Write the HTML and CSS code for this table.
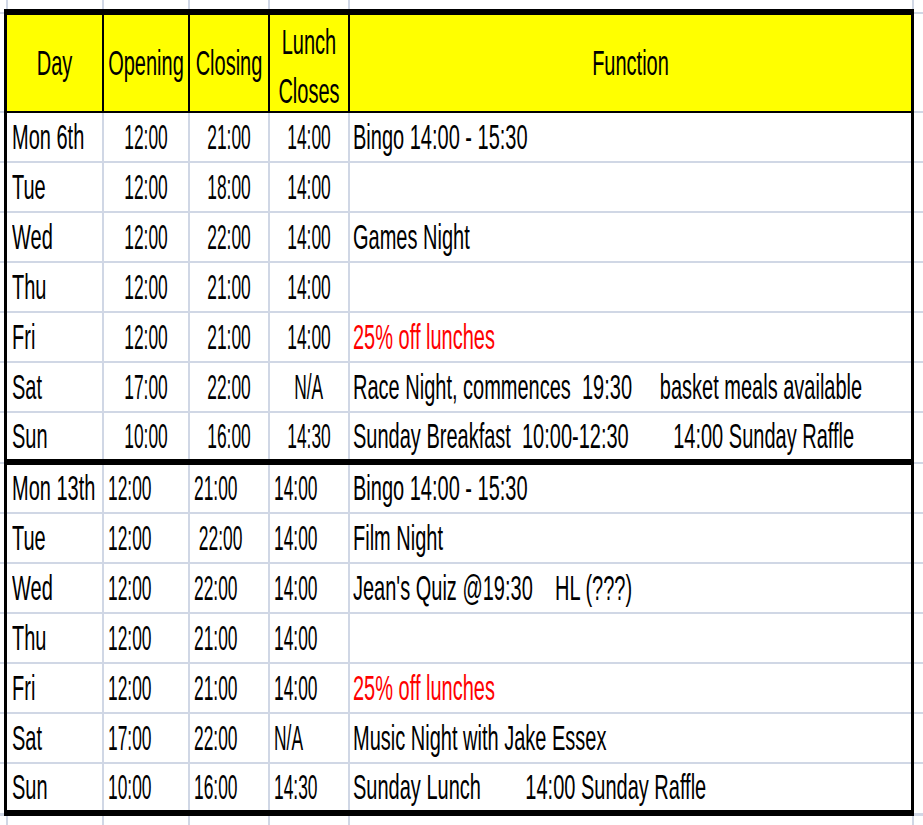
FILE: index.html
```html
<!DOCTYPE html>
<html lang="en">
<head>
<meta charset="utf-8">
<title>Club Opening Times</title>
<link rel="stylesheet" href="styles.css">
</head>
<body>
<div class="sheet">
  <div class="row head">
    <div class="c"><span class="t">Day</span></div>
    <div class="c"><span class="t">Opening</span></div>
    <div class="c"><span class="t">Closing</span></div>
    <div class="c lc"><span class="t two">Lunch
Closes</span></div>
    <div class="c"><span class="t">Function</span></div>
  </div>

  <div class="block b1">
    <div class="row"><div class="c day"><span class="t">Mon 6th</span></div><div class="c tm"><span class="n">12:00</span></div><div class="c tm"><span class="n">21:00</span></div><div class="c tm"><span class="n">14:00</span></div><div class="c fn"><span class="t">Bingo 14:00 - 15:30</span></div></div>
    <div class="row"><div class="c day"><span class="t">Tue</span></div><div class="c tm"><span class="n">12:00</span></div><div class="c tm"><span class="n">18:00</span></div><div class="c tm"><span class="n">14:00</span></div><div class="c fn"></div></div>
    <div class="row"><div class="c day"><span class="t">Wed</span></div><div class="c tm"><span class="n">12:00</span></div><div class="c tm"><span class="n">22:00</span></div><div class="c tm"><span class="n">14:00</span></div><div class="c fn"><span class="t">Games Night</span></div></div>
    <div class="row"><div class="c day"><span class="t">Thu</span></div><div class="c tm"><span class="n">12:00</span></div><div class="c tm"><span class="n">21:00</span></div><div class="c tm"><span class="n">14:00</span></div><div class="c fn"></div></div>
    <div class="row"><div class="c day"><span class="t">Fri</span></div><div class="c tm"><span class="n">12:00</span></div><div class="c tm"><span class="n">21:00</span></div><div class="c tm"><span class="n">14:00</span></div><div class="c fn"><span class="t red">25% off lunches</span></div></div>
    <div class="row"><div class="c day"><span class="t">Sat</span></div><div class="c tm"><span class="n">17:00</span></div><div class="c tm"><span class="n">22:00</span></div><div class="c tm"><span class="n">N/A</span></div><div class="c fn"><span class="t">Race Night, commences  19:30     basket meals available</span></div></div>
    <div class="row"><div class="c day"><span class="t">Sun</span></div><div class="c tm"><span class="n">10:00</span></div><div class="c tm"><span class="n">16:00</span></div><div class="c tm"><span class="n">14:30</span></div><div class="c fn"><span class="t">Sunday Breakfast  10:00-12:30        14:00 Sunday Raffle</span></div></div>
  </div>

  <div class="block b2">
    <div class="row"><div class="c day"><span class="t">Mon 13th</span></div><div class="c tl"><span class="n">12:00</span></div><div class="c tl"><span class="n">21:00</span></div><div class="c tl"><span class="n">14:00</span></div><div class="c fn"><span class="t">Bingo 14:00 - 15:30</span></div></div>
    <div class="row"><div class="c day"><span class="t">Tue</span></div><div class="c tl"><span class="n">12:00</span></div><div class="c tl"><span class="n"> 22:00</span></div><div class="c tl"><span class="n">14:00</span></div><div class="c fn"><span class="t">Film Night</span></div></div>
    <div class="row"><div class="c day"><span class="t">Wed</span></div><div class="c tl"><span class="n">12:00</span></div><div class="c tl"><span class="n">22:00</span></div><div class="c tl"><span class="n">14:00</span></div><div class="c fn"><span class="t">Jean's Quiz @19:30    HL (???)</span></div></div>
    <div class="row"><div class="c day"><span class="t">Thu</span></div><div class="c tl"><span class="n">12:00</span></div><div class="c tl"><span class="n">21:00</span></div><div class="c tl"><span class="n">14:00</span></div><div class="c fn"></div></div>
    <div class="row"><div class="c day"><span class="t">Fri</span></div><div class="c tl"><span class="n">12:00</span></div><div class="c tl"><span class="n">21:00</span></div><div class="c tl"><span class="n">14:00</span></div><div class="c fn"><span class="t red">25% off lunches</span></div></div>
    <div class="row"><div class="c day"><span class="t">Sat</span></div><div class="c tl"><span class="n">17:00</span></div><div class="c tl"><span class="n">22:00</span></div><div class="c tl"><span class="n">N/A</span></div><div class="c fn"><span class="t">Music Night with Jake Essex</span></div></div>
    <div class="row"><div class="c day"><span class="t">Sun</span></div><div class="c tl"><span class="n">10:00</span></div><div class="c tl"><span class="n">16:00</span></div><div class="c tl"><span class="n">14:30</span></div><div class="c fn"><span class="t">Sunday Lunch        14:00 Sunday Raffle</span></div></div>
  </div>
</div>
</body>
</html>
```

FILE: styles.css
```css
html, body {
  margin: 0;
  padding: 0;
}

body {
  width: 923px;
  height: 825px;
  overflow: hidden;
  font-family: "Liberation Sans", Arial, sans-serif;
  color: #000;
  background-color: #fff;
  background-image:
    linear-gradient(#d0d7e5, #d0d7e5),
    linear-gradient(#d0d7e5, #d0d7e5),
    linear-gradient(#d0d7e5, #d0d7e5),
    linear-gradient(#d0d7e5, #d0d7e5),
    linear-gradient(#d0d7e5, #d0d7e5),
    linear-gradient(#d0d7e5, #d0d7e5),
    linear-gradient(#d0d7e5, #d0d7e5),
    linear-gradient(#d0d7e5, #d0d7e5),
    linear-gradient(#d0d7e5, #d0d7e5),
    linear-gradient(#d0d7e5, #d0d7e5),
    linear-gradient(#d0d7e5, #d0d7e5),
    linear-gradient(#d0d7e5, #d0d7e5),
    linear-gradient(#d0d7e5, #d0d7e5),
    linear-gradient(#d0d7e5, #d0d7e5),
    linear-gradient(#d0d7e5, #d0d7e5),
    linear-gradient(#d0d7e5, #d0d7e5),
    linear-gradient(#d0d7e5, #d0d7e5),
    linear-gradient(#d0d7e5, #d0d7e5),
    linear-gradient(#d0d7e5, #d0d7e5),
    linear-gradient(#d0d7e5, #d0d7e5),
    linear-gradient(#d0d7e5, #d0d7e5),
    linear-gradient(#d0d7e5, #d0d7e5);
  background-repeat: no-repeat;
  background-size:
    2px 100%, 2px 100%, 2px 100%, 2px 100%, 2px 100%, 2px 100%,
    100% 2px, 100% 2px, 100% 2px, 100% 2px, 100% 2px, 100% 2px,
    100% 2px, 100% 2px, 100% 2px, 100% 2px, 100% 2px, 100% 2px,
    100% 2px, 100% 2px, 100% 2px, 100% 3px;
  background-position:
    6px 0, 102px 0, 188px 0, 268px 0, 348px 0, 912px 0,
    0 12px, 0 111px, 0 161px, 0 211px, 0 261px, 0 311px,
    0 361px, 0 411px, 0 462px, 0 512px, 0 562px, 0 612px,
    0 662px, 0 712px, 0 762px, 0 813px;
}

.sheet {
  margin: 9px 0 0 4px;
  width: 910px;
  box-sizing: border-box;
  border: 3px solid #000;
  border-top-width: 6px;
  border-bottom-width: 6px;
  background: #fff;
}

.row {
  display: grid;
  grid-template-columns: 95px 84px 78px 78px 561px;
  column-gap: 2px;
  background: #d0d7e5;
  height: 50px;
  box-sizing: border-box;
  border-bottom: 2px solid #d0d7e5;
}

.head {
  height: 98px;
  background: #000;
  border-bottom: 2px solid #000;
}

.block .row:last-child {
  height: 46px;
  border-bottom: none;
}

.b1 {
  border-bottom: 6px solid #000;
}

.b2 .row:first-child {
  height: 49px;
}

.c {
  background: #fff;
  display: flex;
  align-items: center;
  white-space: pre;
  overflow: visible;
  min-width: 0;
}

.head .c {
  background: #ff0;
  justify-content: center;
  text-align: center;
}

.head .lc {
  padding-top: 6px;
}

.day {
  padding-left: 5px;
}

.fn {
  padding-left: 3px;
}

.tm {
  justify-content: center;
}

.tl {
  padding-left: 4px;
}

.t,
.n {
  display: inline-block;
  font-size: 20px;
  line-height: 23px;
  transform-origin: left center;
}

.t {
  transform: scaleY(1.75);
}

.n {
  transform: scale(0.87, 1.75);
}

.tm .n,
.head .t {
  transform-origin: center center;
}

.two {
  line-height: 28px;
}

.red {
  color: #ff0000;
}
```
